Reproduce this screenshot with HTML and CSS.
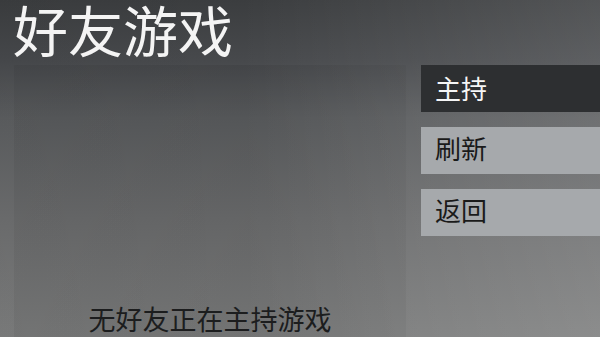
FILE: index.html
```html
<!DOCTYPE html>
<html lang="zh-CN">
<head>
<meta charset="utf-8">
<title>好友游戏</title>
<link rel="stylesheet" href="styles.css">
</head>
<body>
<div class="screen">
  <header class="header">
    <h1 class="title">好友游戏</h1>
  </header>
  <div class="main">
    <section class="panel">
      <p class="empty">无好友正在主持游戏</p>
    </section>
    <nav class="menu">
      <div class="btn btn-active">主持</div>
      <div class="btn">刷新</div>
      <div class="btn">返回</div>
    </nav>
  </div>
</div>
</body>
</html>
```
FILE: styles.css
```css
html, body {
  margin: 0;
  padding: 0;
  width: 600px;
  height: 337px;
  overflow: hidden;
}
body {
  font-family: "Liberation Sans", "Noto Sans CJK SC", sans-serif;
  background:
    linear-gradient(to right, rgba(0,0,0,0.03) 0%, rgba(255,255,255,0) 40%, rgba(255,255,255,0.12) 100%),
    linear-gradient(to bottom, #3b3d3f 0%, #47494c 18%, #5b5d5f 35%, #6c6d6e 65%, #7c7d7d 100%);
}
.screen {
  display: flex;
  flex-direction: column;
  height: 337px;
}
.header {
  height: 65px;
  padding: 2px 0 0 13px;
  box-sizing: border-box;
}
.title {
  margin: 0;
  font-size: 55px;
  font-weight: 400;
  line-height: 62px;
  color: #f4f4f4;
}
.main {
  flex: 1;
  display: flex;
  gap: 15px;
  padding-left: 14px;
  min-height: 0;
}
.panel {
  width: 392px;
  background: linear-gradient(to right, rgba(0,0,0,0.05), rgba(0,0,0,0.08) 60%, rgba(0,0,0,0.04));
  display: flex;
  flex-direction: column;
  justify-content: flex-end;
  align-items: center;
}
.empty {
  margin: 0;
  font-size: 27px;
  line-height: 31px;
  color: #1c1d1e;
}
.menu {
  flex: 1;
  display: flex;
  flex-direction: column;
  gap: 15px;
}
.btn {
  height: 47px;
  padding-left: 14px;
  box-sizing: border-box;
  font-size: 26px;
  line-height: 47px;
  color: #1a1a1a;
  background: #a6a9ac;
}
.btn-active {
  padding-top: 4px;
  line-height: 43px;
  background: #2d2f31;
  color: #f6f6f6;
}
```
